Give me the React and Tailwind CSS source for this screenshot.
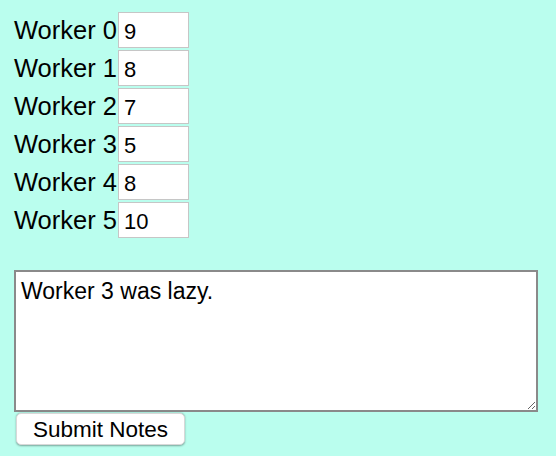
export default function App() {
  const workers = [9, 8, 7, 5, 8, 10];
  return (
    <div className="w-[556px] h-[456px] bg-[#bafeee] overflow-hidden font-['Liberation_Sans',Arial,sans-serif] text-black">
      <div className="pt-[12px] pl-[14px] flex flex-col gap-[2px]">
        {workers.map((v, i) => (
          <div key={i} className="flex items-center h-[36px]">
            <span className="w-[104px] text-[25.5px] leading-none whitespace-nowrap pt-[2px]">Worker {i}</span>
            <input
              readOnly
              value={v}
              className="w-[71px] h-[36px] bg-white border border-[#c6c6c6] pl-[5px] pt-[3px] text-[22px] outline-none"
            />
          </div>
        ))}
      </div>
      <div className="pl-[14px] pt-[32px] flex flex-col">
        <textarea
          readOnly
          value="Worker 3 was lazy."
          className="w-[524px] h-[142px] bg-white border-2 border-[#8a8a8a] px-[5px] py-[6px] text-[23px] leading-[26px] outline-none resize"
        />
        <div className="pt-[1px] pl-[2px]">
          <button className="w-[169px] h-[32px] bg-white rounded-[5px] text-[22.5px] leading-none pt-[2px] shadow-[0_0.5px_2px_rgba(0,0,0,0.35)] border border-[#d8d8d8]">
            Submit Notes
          </button>
        </div>
      </div>
    </div>
  );
}
